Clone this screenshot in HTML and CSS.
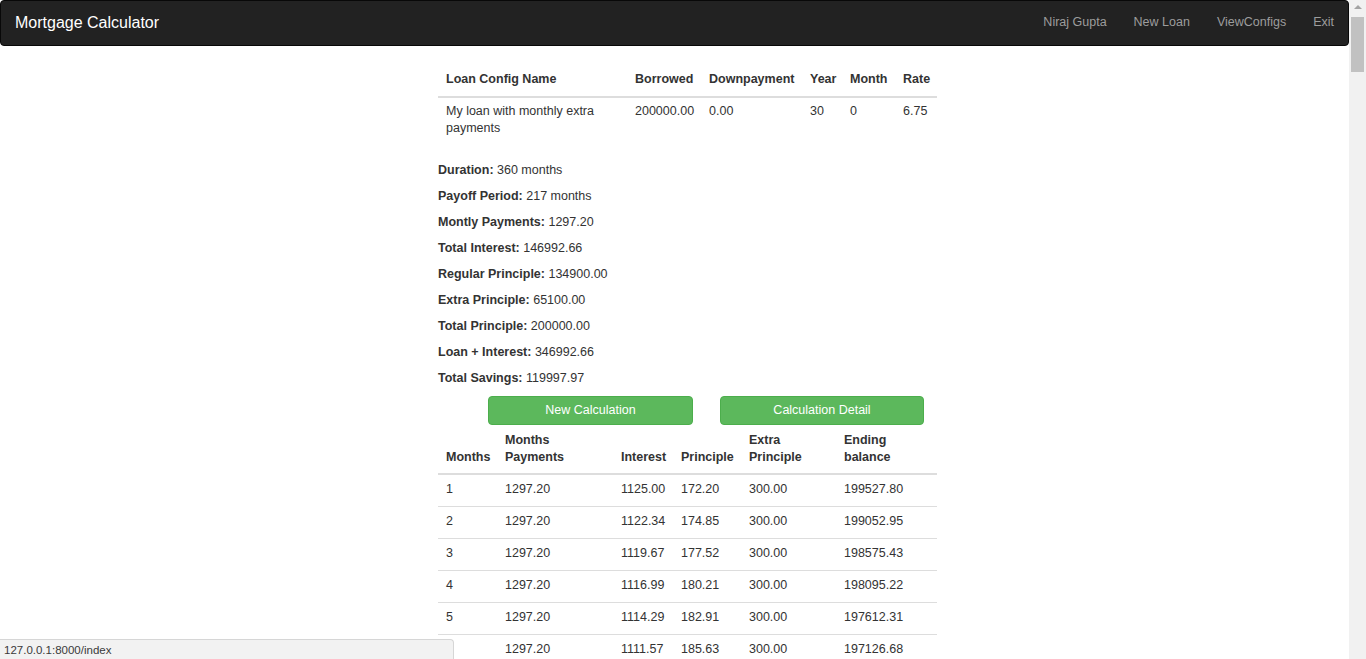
FILE: index.html
```html
<!DOCTYPE html>
<html lang="en">
<head>
<meta charset="utf-8">
<title>Mortgage Calculator</title>
<link rel="stylesheet" href="styles.css">
</head>
<body>
<div class="window">
  <div class="viewport">
    <nav class="navbar">
      <a class="brand" href="#">Mortgage Calculator</a>
      <ul class="nav">
        <li><a href="#">Niraj Gupta</a></li>
        <li><a href="#">New Loan</a></li>
        <li><a href="#">ViewConfigs</a></li>
        <li><a href="#">Exit</a></li>
      </ul>
    </nav>
    <main class="content">
      <table class="table config">
        <thead>
          <tr>
            <th class="c-name">Loan Config Name</th>
            <th class="c-borrowed">Borrowed</th>
            <th class="c-down">Downpayment</th>
            <th class="c-year">Year</th>
            <th class="c-month">Month</th>
            <th class="c-rate">Rate</th>
          </tr>
        </thead>
        <tbody>
          <tr>
            <td>My loan with monthly extra payments</td>
            <td>200000.00</td>
            <td>0.00</td>
            <td>30</td>
            <td>0</td>
            <td>6.75</td>
          </tr>
        </tbody>
      </table>

      <div class="summary">
        <p><b>Duration:</b> 360 months</p>
        <p><b>Payoff Period:</b> 217 months</p>
        <p><b>Montly Payments:</b> 1297.20</p>
        <p><b>Total Interest:</b> 146992.66</p>
        <p><b>Regular Principle:</b> 134900.00</p>
        <p><b>Extra Principle:</b> 65100.00</p>
        <p><b>Total Principle:</b> 200000.00</p>
        <p><b>Loan + Interest:</b> 346992.66</p>
        <p><b>Total Savings:</b> 119997.97</p>
      </div>

      <div class="actions">
        <a class="btn btn-new" href="#">New Calculation</a>
        <a class="btn btn-detail" href="#">Calculation Detail</a>
      </div>

      <table class="table schedule">
        <thead>
          <tr>
            <th class="s-months">Months</th>
            <th class="s-pay">Months<br>Payments</th>
            <th class="s-int">Interest</th>
            <th class="s-prin">Principle</th>
            <th class="s-extra">Extra<br>Principle</th>
            <th class="s-end">Ending<br>balance</th>
          </tr>
        </thead>
        <tbody>
          <tr><td>1</td><td>1297.20</td><td>1125.00</td><td>172.20</td><td>300.00</td><td>199527.80</td></tr>
          <tr><td>2</td><td>1297.20</td><td>1122.34</td><td>174.85</td><td>300.00</td><td>199052.95</td></tr>
          <tr><td>3</td><td>1297.20</td><td>1119.67</td><td>177.52</td><td>300.00</td><td>198575.43</td></tr>
          <tr><td>4</td><td>1297.20</td><td>1116.99</td><td>180.21</td><td>300.00</td><td>198095.22</td></tr>
          <tr><td>5</td><td>1297.20</td><td>1114.29</td><td>182.91</td><td>300.00</td><td>197612.31</td></tr>
          <tr><td>6</td><td>1297.20</td><td>1111.57</td><td>185.63</td><td>300.00</td><td>197126.68</td></tr>
        </tbody>
      </table>
    </main>
    <div class="status">127.0.0.1:8000/index</div>
  </div>
  <div class="scrollbar">
    <div class="sb-arrow"><span class="sb-tri"></span></div>
    <div class="sb-thumb"></div>
    <div class="sb-track"></div>
  </div>
</div>
</body>
</html>
```

FILE: styles.css
```css
* { box-sizing: border-box; }

html, body {
  margin: 0;
  padding: 0;
  height: 100%;
  overflow: hidden;
}

body {
  font-family: "Liberation Sans", Arial, Helvetica, sans-serif;
  font-size: 12.5px;
  line-height: 17px;
  color: #333;
  background: #fff;
}

a { text-decoration: none; }

.window {
  display: flex;
  height: 659px;
}

.viewport {
  flex: 1;
  overflow: hidden;
  min-width: 0;
}

/* navbar */
.navbar {
  height: 46px;
  background: #222;
  border: 1px solid #080808;
  border-radius: 4px;
  display: flex;
  align-items: flex-start;
  justify-content: space-between;
  padding: 13px 14px 0 14px;
}

.brand {
  color: #fff;
  font-size: 16px;
  line-height: 17px;
}

.nav {
  list-style: none;
  margin: 0;
  padding: 0;
  display: flex;
  gap: 27px;
}

.nav a {
  color: #9d9d9d;
  font-size: 12.5px;
  line-height: 16px;
}

/* content column */
.content {
  width: 937px;
  padding: 18px 0 0 438px;
}

.table {
  width: 499px;
  border-collapse: collapse;
  table-layout: fixed;
}

.table th {
  text-align: left;
  font-weight: bold;
  vertical-align: bottom;
  white-space: nowrap;
  padding: 6px 8px 8px;
  border-bottom: 2px solid #ddd;
}

.table td {
  vertical-align: top;
  padding: 6px 8px 8px;
  border-top: 1px solid #ddd;
}

.config { margin-bottom: 17px; }
.config th { padding-top: 7px; }
.config td { padding-top: 5px; }

.schedule th { padding-top: 7px; padding-bottom: 7px; }

.c-name { width: 189px; }
.c-borrowed { width: 74px; }
.c-down { width: 101px; }
.c-year { width: 40px; }
.c-month { width: 53px; }
.c-rate { width: 42px; }

.s-months { width: 59px; }
.s-pay { width: 116px; }
.s-int { width: 60px; }
.s-prin { width: 68px; }
.s-extra { width: 95px; }
.s-end { width: 101px; }

/* summary */
.summary {
  display: flex;
  flex-direction: column;
  gap: 9px;
  margin-bottom: 9px;
}

.summary p { margin: 0; }

/* buttons */
.actions {
  display: flex;
  gap: 27px;
  padding-left: 50px;
}

.btn {
  display: block;
  height: 29px;
  line-height: 17px;
  padding: 5px 10px;
  text-align: center;
  color: #fff;
  background: #5cb85c;
  border: 1px solid #4cae4c;
  border-radius: 4px;
  font-size: 12.5px;
}

.btn-new { width: 205px; }
.btn-detail { width: 204px; }

/* browser status bubble (overlay) */
.status {
  position: fixed;
  left: 0;
  bottom: 0;
  width: 454px;
  height: 20px;
  padding: 3px 4px 0;
  background: #f2f2f2;
  border-top: 1px solid #d6d6d6;
  border-right: 1px solid #d6d6d6;
  border-top-right-radius: 4px;
  color: #3a3a3a;
  font-size: 11.5px;
  line-height: 15px;
}

/* fake scrollbar */
.scrollbar {
  width: 17px;
  flex: none;
  display: flex;
  flex-direction: column;
  background: #f1f1f1;
}

.sb-arrow {
  height: 17px;
  display: flex;
  align-items: center;
  justify-content: center;
}

.sb-tri {
  width: 0;
  height: 0;
  border-left: 4px solid transparent;
  border-right: 4px solid transparent;
  border-bottom: 4px solid #a3a3a3;
  margin-top: -3px;
}

.sb-thumb {
  height: 55px;
  margin: 0 2px;
  background: #c1c1c1;
}

.sb-track { flex: 1; }
```
